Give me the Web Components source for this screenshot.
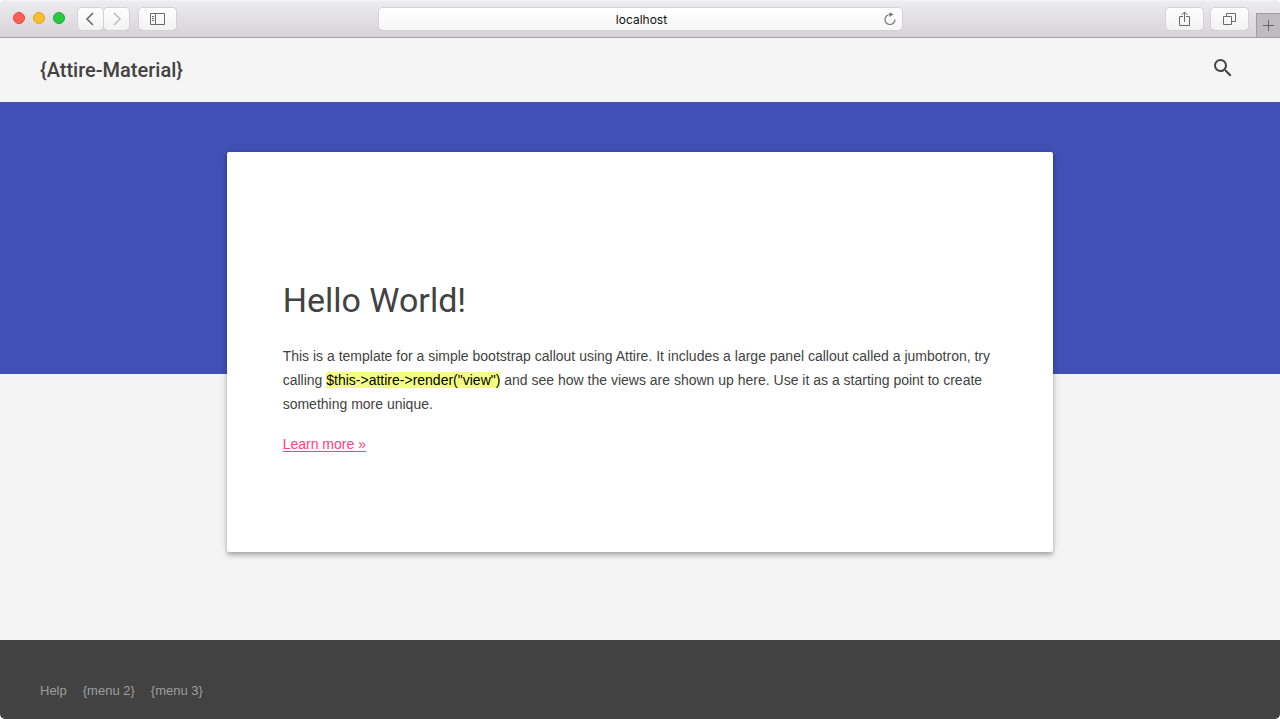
<!DOCTYPE html>
<html lang="en">
<head>
<meta charset="utf-8">
<meta name="viewport" content="width=device-width, initial-scale=1">
<title>Attire-Material</title>
<style>
  html { background: #fff; }
  body { margin: 0; font-family: "Liberation Sans", Arial, sans-serif; color: #424242; }
</style>
</head>
<body>
<browser-window>
  <browser-toolbar slot="toolbar" address="localhost"></browser-toolbar>
  <app-header>{Attire-Material}</app-header>
  <app-hero>
    <callout-card heading="Hello World!">
      This is a template for a simple bootstrap callout using Attire. It includes a large panel callout called a jumbotron, try calling <high-light>$this-&gt;attire-&gt;render("view")</high-light> and see how the views are shown up here. Use it as a starting point to create something more unique.
      <app-link slot="action" to="#more">Learn more »</app-link>
    </callout-card>
  </app-hero>
  <app-footer slot="footer">
    <app-link to="#help">Help</app-link>
    <app-link to="#menu2">{menu 2}</app-link>
    <app-link to="#menu3">{menu 3}</app-link>
  </app-footer>
</browser-window>

<script>
  const define = (name, html, setup) => customElements.define(name, class extends HTMLElement {
    connectedCallback() {
      if (this.shadowRoot) return;
      const template = document.createElement('template');
      template.innerHTML = html;
      this.attachShadow({ mode: 'open' }).append(template.content.cloneNode(true));
      if (setup) setup(this, this.shadowRoot);
    }
  });

  define('browser-window', `
    <style>
      :host { display: flex; flex-direction: column; min-height: 100vh; overflow: hidden; border-radius: 5px; background: #f4f4f4; }
      main { flex: 1; }
    </style>
    <slot name="toolbar"></slot>
    <main><slot></slot></main>
    <slot name="footer"></slot>`);

  define('tool-button', `
    <style>
      :host { display: block; width: 37px; }
      :host([narrow]) { width: 25px; }
      button { display: flex; align-items: center; justify-content: center; box-sizing: border-box; width: 100%; height: 22px; margin: 0; padding: 0; border: 0; border-radius: 4px; background: linear-gradient(#fefefe, #f2f2f2); box-shadow: 0 0 0 1px #d3d1d3, 0 1px 0 #aeacae; color: #6b6b6b; }
      :host([dim]) button { color: #bdbdbd; }
    </style>
    <button type="button"><slot></slot></button>`,
    (host, root) => root.querySelector('button').setAttribute('aria-label', host.getAttribute('label')));

  define('browser-toolbar', `
    <style>
      :host { display: grid; grid-template-columns: 1fr minmax(0, 524px) 1fr; align-items: start; box-sizing: border-box; height: 38px; background: linear-gradient(#f6f5f6, #ecebed 2px, #d5d3d5); border-bottom: 1px solid #a2a0a2; }
      .left, .right { display: flex; }
      .left { padding: 8px 0 0 13px; }
      .lights { display: flex; gap: 8px; padding-top: 4px; margin-right: 13px; }
      .lights i { box-sizing: border-box; width: 12px; height: 12px; border-radius: 50%; border: 1px solid #e2463f; background: #ff5f57; }
      .lights i:nth-child(2) { border-color: #e0a028; background: #ffbd2e; }
      .lights i:nth-child(3) { border-color: #1bac2b; background: #28ca42; }
      .nav { display: flex; gap: 1px; margin-right: 10px; }
      .right { justify-content: flex-end; }
      .actions { display: flex; gap: 8px; padding: 8px 8px 0 0; }
      .new { display: flex; align-items: center; justify-content: center; box-sizing: border-box; width: 24px; height: 24px; margin: 13px 0 0; padding: 0; border: 1px solid #a09ea0; border-width: 1px 0 0 1px; background: #bebcbe; color: #666; }
      .field { display: flex; align-items: center; height: 22px; margin: 8px 0 0 1px; border-radius: 4px; background: linear-gradient(#fff, #f6f6f6); box-shadow: 0 0 0 1px #d3d1d3, 0 1px 0 #aeacae; }
      input { flex: 1; min-width: 0; height: 22px; margin: 0; padding: 1px 0 0 24px; border: 0; outline: 0; background: none; color: #111; text-align: center; font: 12px "Inter", Roboto, sans-serif; }
      .reload { display: flex; width: 22px; margin: 0; padding: 0 0 0 3px; border: 0; background: none; color: #7a7a7a; }
      svg { display: block; fill: none; stroke: currentColor; }
    </style>
    <div class="left">
      <div class="lights"><i></i><i></i><i></i></div>
      <div class="nav">
        <tool-button narrow label="Back"><svg width="13" height="14" stroke-width="1.6"><path d="M9 1 3 7l6 6"/></svg></tool-button>
        <tool-button narrow dim label="Forward"><svg width="13" height="14" stroke-width="1.6"><path d="M4 1l6 6-6 6"/></svg></tool-button>
      </div>
      <tool-button label="Sidebar"><svg width="15" height="12"><path d="M.5.5h14v11H.5zM5.500.5v11M2 3.500h2M2 5.500h2M2 7.500h2"/></svg></tool-button>
    </div>
    <div class="field">
      <input type="text" aria-label="Address">
      <button class="reload" type="button" aria-label="Reload"><svg width="14" height="14" stroke-width="1.2"><path d="M7 2.500A5 5 0 1 0 12 7.500"/><path d="M6.500 0v5l4-2.500z" fill="currentColor" stroke="none"/></svg></button>
    </div>
    <div class="right">
      <div class="actions">
        <tool-button label="Share"><svg width="12" height="16"><path d="M4 5.500H.5v9h10v-9H7M5.500 11V1M2.500 4l3-3 3 3"/></svg></tool-button>
        <tool-button label="Tabs"><svg width="13" height="12"><path d="M.5 3.500h8v8h-8zM3.500 3V.5h9v8H9"/></svg></tool-button>
      </div>
      <button class="new" type="button" aria-label="New tab"><svg width="11" height="11"><path d="M0 5.500h11M5.500 0v11"/></svg></button>
    </div>`,
    (host, root) => root.querySelector('input').value = host.getAttribute('address'));

  define('app-header', `
    <style>
      :host { display: flex; align-items: center; justify-content: space-between; height: 64px; padding: 0 40px; background: #f5f5f5; }
      h1 { margin: 0; font: 500 20px/24px Roboto, sans-serif; color: #424242; }
      button { display: flex; margin: 0; padding: 0 5px 4px; border: 0; background: none; color: #424242; }
      svg { display: block; }
    </style>
    <h1><slot></slot></h1>
    <button type="button" aria-label="Search"><svg width="24" height="24" viewBox="0 0 24 24" fill="currentColor"><path d="M15.500 14h-.79l-.28-.27A6.471 6.471 0 0 0 16 9.500 6.500 6.500 0 1 0 9.500 16c1.610 0 3.090-.59 4.230-1.570l.27.28v.79l5 4.990L20.490 19l-4.990-5zm-6 0C7.010 14 5 11.990 5 9.500S7.010 5 9.500 5 14 7.010 14 9.500 11.990 14 9.500 14z"/></svg></button>`);

  define('app-hero', `
    <style>
      :host { display: block; padding: 50px 8px; background: linear-gradient(#3f51b5, #3f51b5) 0 0 / 100% 272px no-repeat; }
    </style>
    <slot></slot>`);

  define('callout-card', `
    <style>
      :host { display: block; box-sizing: border-box; width: calc(66.6667% - 16px); min-height: 400px; margin: 0 auto; padding: 128px 56px 80px; border-radius: 2px; background: #fff; font-size: 14px; line-height: 24px;
        box-shadow: 0 4px 5px 0 rgba(0,0,0,.14), 0 1px 10px 0 rgba(0,0,0,.12), 0 2px 4px -1px rgba(0,0,0,.2); --link: #ff4081; --line: underline; }
      h2 { margin: 0 0 24px; font: 400 34px/40px Roboto, sans-serif; }
      p { margin: 0 0 16px; }
    </style>
    <h2></h2>
    <p><slot></slot></p>
    <p><slot name="action"></slot></p>`,
    (host, root) => root.querySelector('h2').textContent = host.getAttribute('heading'));

  define('high-light', `
    <style>mark { background: #f4ff81; color: #000; }</style><mark><slot></slot></mark>`);

  define('app-link', `
    <style>
      a { color: var(--link); text-decoration: var(--line) 1px; text-underline-offset: 2px; text-decoration-skip-ink: none; }
    </style>
    <a><slot></slot></a>`,
    (host, root) => root.querySelector('a').href = host.getAttribute('to'));

  define('app-footer', `
    <style>
      :host { display: block; padding: 41px 40px 18px; background: #424242; --link: #9e9e9e; --line: none; }
      nav { display: flex; gap: 16px; font-size: 13px; line-height: 20px; }
    </style>
    <nav><slot></slot></nav>`);
</script>
</body>
</html>
